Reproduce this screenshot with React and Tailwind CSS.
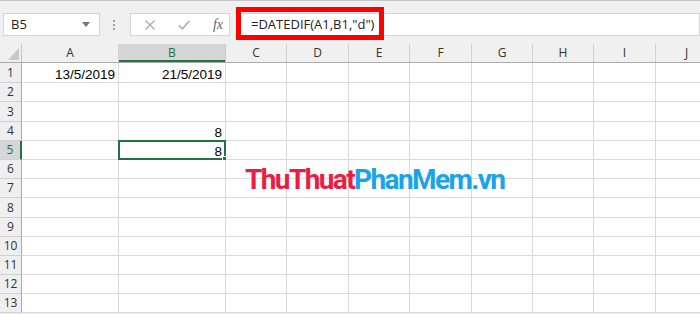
import React from 'react';

const cols = [
  { label: 'A', w: 'w-[97px]' },
  { label: 'B', w: 'w-[107px]' },
  { label: 'C', w: 'w-[61px]' },
  { label: 'D', w: 'w-[62px]' },
  { label: 'E', w: 'w-[61px]' },
  { label: 'F', w: 'w-[62px]' },
  { label: 'G', w: 'w-[61px]' },
  { label: 'H', w: 'w-[61px]' },
  { label: 'I', w: 'w-[62px]' },
  { label: 'J', w: 'w-[62px]' },
];

const rowHeights = ['h-[20px]', 'h-[19px]', 'h-[20px]', 'h-[19px]', 'h-[19px]', 'h-[19px]', 'h-[19px]', 'h-[20px]', 'h-[19px]', 'h-[19px]', 'h-[19px]', 'h-[19px]', 'h-[19px]'];

const data = {
  '1A': '13/5/2019',
  '1B': '21/5/2019',
  '4B': '8',
  '5B': '8',
};

const ui = { fontFamily: '"Open Sans", "Noto Sans", sans-serif' };
const cellFont = { fontFamily: '"Liberation Sans", Arial, sans-serif' };

const FormulaBar = () => (
  <div className="relative h-[44px] flex items-start pt-[12px] pl-[3px] border-t border-[#c6c6c6]" style={ui}>
    <div className="w-[97px] h-[23px] bg-white border border-[#d4d4d4] flex items-center justify-between pl-[7px] pr-[9px] text-[13px] text-[#222]">
      <span>B5</span>
      <svg width="8" height="5" viewBox="0 0 8 5"><path d="M0 0h8L4 5z" fill="#777" /></svg>
    </div>
    <div className="w-[30px] h-[23px] flex flex-col items-center justify-center gap-[2px] pr-[3px]">
      <span className="w-[2px] h-[2px] bg-[#a0a0a0]" />
      <span className="w-[2px] h-[2px] bg-[#a0a0a0]" />
      <span className="w-[2px] h-[2px] bg-[#a0a0a0]" />
    </div>
    <div className="w-[100px] h-[23px] bg-white border border-[#d4d4d4] flex items-center">
      <div className="w-[32px] flex justify-center pl-[6px]">
        <svg width="10" height="10" viewBox="0 0 10 10"><path d="M0.5 0.5l9 9M9.5 0.5l-9 9" stroke="#ababab" strokeWidth="1.3" /></svg>
      </div>
      <div className="w-[34px] flex justify-center pl-[8px]">
        <svg width="12" height="10" viewBox="0 0 12 10"><path d="M0.8 5.2l3.6 3.6L11.2 1" stroke="#ababab" strokeWidth="1.5" fill="none" /></svg>
      </div>
      <div className="flex-1 flex justify-center pl-[10px]">
        <span className="italic text-[14px] text-[#666]" style={{ fontFamily: '"Liberation Serif", serif' }}>fx</span>
      </div>
    </div>
    <div className="flex-1 h-[23px] ml-[6px] bg-white border border-[#d4d4d4] flex items-center pl-[14px] text-[13px] text-[#222]">
      =DATEDIF(A1,B1,"d")
    </div>
    <div className="absolute left-[236px] top-[6px] w-[148px] h-[33px] border-[5px] border-[#ff0000]" />
  </div>
);

const Sheet = () => (
  <div className="flex flex-col" style={ui}>
    <div className="flex h-[19px] border-b border-[#ababab]">
      <div className="w-[22px] shrink-0 relative border-r border-[#c6c6c6]">
        <svg className="absolute left-[8px] top-[4px]" width="11" height="12" viewBox="0 0 11 12"><path d="M11 0v12H0z" fill="#c9c9c9" /></svg>
      </div>
      {cols.map((c) => (
        <div
          key={c.label}
          className={`${c.w} shrink-0 flex items-center justify-center text-[12px] border-r ${c.label === 'B' ? 'bg-[#d6d6d6] text-[#217346] border-[#c6c6c6] shadow-[inset_0_-2px_0_#217346]' : 'text-[#333] border-[#d0d0d0]'}`}
        >
          {c.label}
        </div>
      ))}
    </div>
    {rowHeights.map((h, i) => {
      const r = i + 1;
      const sel = r === 5;
      return (
        <div key={r} className={`flex ${h}`}>
          <div
            className={`w-[22px] shrink-0 flex items-center justify-center text-[12px] border-b border-[#d0d0d0] ${sel ? 'bg-[#d6d6d6] text-[#217346] border-r-2 border-r-[#217346]' : 'bg-[#efefef] text-[#333] border-r border-r-[#ababab]'}`}
          >
            {r}
          </div>
          {cols.map((c) => {
            const v = data[`${r}${c.label}`];
            const isSel = sel && c.label === 'B';
            return (
              <div
                key={c.label}
                className={`${c.w} shrink-0 relative bg-white border-r border-b border-[#dadada] flex items-end justify-end pr-[3px] pb-[1px] text-[13.5px] text-black leading-none`}
                style={cellFont}
              >
                {v}
                {isSel && (
                  <>
                    <div className="absolute -left-[1px] -top-[1px] -right-[1px] -bottom-[1px] border-2 border-[#217346]" />
                    <div className="absolute -right-[3px] -bottom-[3px] w-[6px] h-[6px] bg-[#217346] border border-white" />
                  </>
                )}
              </div>
            );
          })}
        </div>
      );
    })}
  </div>
);

export default function App() {
  return (
    <div className="relative w-[700px] h-[314px] overflow-hidden bg-[#f0f0f0]">
      <FormulaBar />
      <Sheet />
      <div
        className="absolute left-[245px] top-[166px] text-[28px] font-bold tracking-[-1.6px] leading-none"
        style={{ fontFamily: 'Roboto, "Liberation Sans", sans-serif' }}
      >
        <span className="text-[#ec1c45]">ThuThuat</span>
        <span className="text-[#1ba3e8]">PhanMem.vn</span>
      </div>
    </div>
  );
}
